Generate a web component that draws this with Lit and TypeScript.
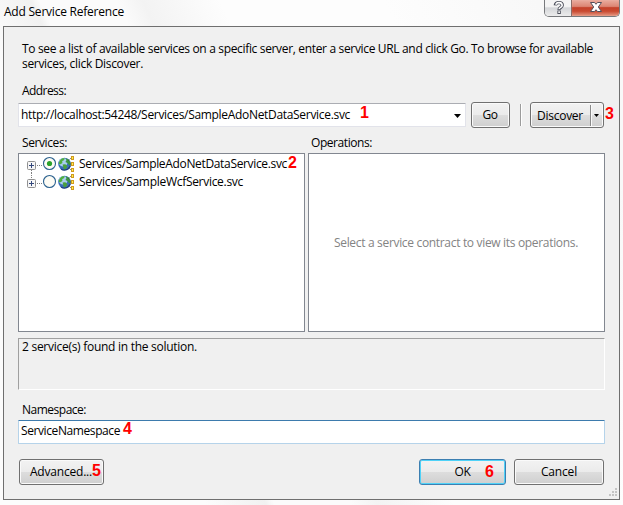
import { LitElement, html, css, svg } from "lit";
import { customElement } from "lit/decorators.js";

const FONT = '12px "Open Sans", "Noto Sans", sans-serif';
const pen = document.createElement("canvas").getContext("2d")!;

// Sets a run of text to a given advance width by spreading the difference over its letters.
const run = (text: string, width: number) => {
  pen.font = FONT;
  const gap = (width - pen.measureText(text).width) / text.length;
  return html`<span class="run" style="letter-spacing:${gap.toFixed(3)}px">${text}</span>`;
};

const globe = svg`
  <circle cx="6.5" cy="8" r="6.3" fill="#3a6fb8"/>
  <circle cx="5.2" cy="6.2" r="4.3" fill="#a9cdf0"/>
  <path d="M1 6 L2.6 3.4 L5 2 L7 2.6 L5.6 4.4 L4.2 5 L4.4 7 L2.6 8.2 L.8 8Z" fill="#4fae3e"/>
  <path d="M8 2.4 L10.4 3.2 L12.2 6 L12.6 9 L11 9 L9.4 7 L7.4 6 L8.4 4.4Z" fill="#3a9440"/>
  <path d="M4.6 8.6 L7.4 8.2 L9.4 10.2 L8 12.8 L6.2 13.8 L5.4 11.4Z" fill="#4aa03c"/>
  <path d="M12.5 9.5 A6.3 6.3 0 0 1 3 13" fill="none" stroke="#1d3f80" stroke-width="1.2"/>
  <path d="M10.5 4.5 L13.5 1.5 M12.5 8H14 M10.5 11.5 L13.5 14.5" stroke="#444" stroke-dasharray="1 1" fill="none"/>
  <g fill="#fff04a" stroke="#d09a20" stroke-width="1">
    <rect x="13.5" y="0.5" width="2" height="3"/><rect x="13.5" y="6.5" width="2" height="3"/>
    <rect x="13.5" y="12.5" width="2" height="3"/>
  </g>`;

@customElement("service-row")
class ServiceRow extends LitElement {
  static properties = { label: {}, span: { type: Number }, checked: { type: Boolean } };
  declare label: string;
  declare span: number;
  declare checked: boolean;

  static styles = css`
    :host { display: flex; height: 18px; align-items: center; }
    svg { flex: none; display: block; }
    .run { white-space: pre; line-height: 15px; margin: 0 0 1px 3px; }
  `;

  render() {
    return html`
      <svg width="49" height="18" viewBox="0 0 49 18">
        <path d="M10 10.5H16" stroke="#808080" stroke-dasharray="1 1"/>
        ${this.checked
          ? svg`<path d="M4.5 15V18" stroke="#808080" stroke-dasharray="1 1"/>`
          : svg`<path d="M4.5 0V6" stroke="#808080" stroke-dasharray="1 1"/>`}
        <rect x=".5" y="6.5" width="8" height="8" rx="1" fill="#f6f6f6" stroke="#919191"/>
        <path d="M2 10.5H7M4.5 8V13" stroke="#34487c"/>
        <circle cx="22.5" cy="8.5" r="6" fill="#fdfcf5" stroke="#2b618f" stroke-width="1.1"/>
        ${this.checked ? svg`<circle cx="22.5" cy="8.5" r="2.6" fill="#2ba22b"/>` : ""}
        <g transform="translate(31 1)">${globe}</g>
      </svg>
      ${run(this.label, this.span)}`;
  }
}

@customElement("app-root")
class AppRoot extends LitElement {
  static styles = css`
    :host {
      display: flex; flex-direction: column; position: relative; box-sizing: border-box;
      width: 623px; height: 505px; overflow: hidden; color: #000;
      font: 12px/15px "Open Sans", "Noto Sans", sans-serif;
      background: linear-gradient(65deg, #fcfcfc 0 24%, #f1f1f1 31%, #fbfbfb 32% 41%, #f3f3f3 44%, #fdfdfd 53% 72%, #f8f8f8 90%);
    }
    * { box-sizing: border-box; }
    .run { white-space: pre; }
    .title { display: flex; justify-content: space-between; height: 26px; padding: 0 3px 0 4px; flex: none; }
    .title .run { margin-top: 4px; }
    .caps { display: flex; height: 17px; border: 1px solid #77797c; border-top: 0; border-radius: 0 0 5px 5px; overflow: hidden; width: 76px; }
    .help { width: 27px; background: linear-gradient(#f4f4f4 0 40%, #d4d6d9 50%, #ececec); border-right: 1px solid #8b6b66; }
    .close { flex: 1; background: linear-gradient(#e8a799 0 5%, #dc8674 40%, #c4412a 48%, #c94a31 70%, #e59a85); box-shadow: inset 0 0 1px #fff8; }
    .caps svg { display: block; }
    .body {
      display: flex; flex-direction: column; width: 617px; height: 474px; margin-left: 3px; flex: none;
      border: 1px solid #6f6f6f; background: #f0f0f0; padding: 15px 14px 0 14px; position: relative;
    }
    .intro { display: flex; flex-direction: column; padding-left: 4px; height: 42px; margin-top: -1px; }
    .label { padding-left: 4px; height: 15px; display: flex; }
    .address { display: flex; margin-top: 4px; height: 26px; align-items: center; }
    .combo {
      width: 448px; height: 24px; background: #fff; border: 1px solid #e2e3ea; border-top-color: #abadb3;
      display: flex; align-items: center; justify-content: space-between; padding: 0 4px 2px 2px; border-radius: 1px;
    }
    .combo svg { margin-top: 3px; }
    .btn {
      height: 26px; border: 1px solid #707070; border-radius: 3px; display: flex; align-items: center; justify-content: center;
      background: linear-gradient(#f2f2f2, #ebebeb 49%, #dddddd 51%, #cfcfcf); box-shadow: inset 0 0 0 1px #fafafa; flex: none;
    }
    .go { width: 39px; margin-left: 5px; padding: 0 1px 2px 0; }
    .rule { width: 1px; height: 22px; background: #9c9c9c; margin: 0 9px 0 10px; box-shadow: 1px 0 #fff; }
    .split { width: 74px; justify-content: flex-start; padding-left: 6px; }
    .split i { width: 1px; height: 21px; background: #8a8a8a; margin-left: 7px; box-shadow: 1px 0 #fafafa; }
    .split svg { margin-left: 3px; }
    .panes { display: grid; grid-template-columns: 287px 297px; column-gap: 3px; margin-top: 7px; }
    .panes .label { padding-left: 3px; }
    .panes > :first-child .label { padding-left: 4px; }
    .list { height: 179px; margin-top: 3px; background: #fff; border: 1px solid #828790; }
    .tree { padding: 1px 0 0 8px; }
    .empty { display: flex; align-items: center; justify-content: center; color: #838383; padding-right: 1px; }
    .status { height: 52px; margin-top: 6px; border: 1px solid #a0a0a0; border-right-color: #fff; border-bottom-color: #fff; padding: 0 0 0 3px; }
    .ns { margin-top: 12px; }
    .input {
      height: 24px; margin-top: 3px; background: #fff; border: 1px solid #b5d3ea; border-top-color: #3d7bad;
      border-radius: 1px; padding: 2px; display: flex;
    }
    .foot { display: flex; margin: 15px 1px 0; }
    .foot .btn { padding-bottom: 1px; }
    .adv { width: 85px; padding-right: 1px; }
    .ok { width: 87px; margin-left: auto; border-color: #3c7fb1; box-shadow: inset 0 0 0 1px #4fd2f8; }
    .cancel { width: 90px; margin-left: 8px; }
    .grip { position: absolute; right: 1px; bottom: 1px; }
    .mark { position: absolute; font: bold 16px/16px "Liberation Sans", Arial, sans-serif; color: #f00; }
    .m1 { left: 360px; top: 105px; } .m2 { left: 288px; top: 155px; } .m3 { left: 605px; top: 106px; }
    .m4 { left: 123px; top: 421px; } .m5 { left: 92px; top: 463px; } .m6 { left: 485px; top: 464px; }
  `;

  render() {
    return html`
      <div class="title">
        ${run("Add Service Reference", 120)}
        <div class="caps">
          <div class="help"><svg width="26" height="16" viewBox="0 0 26 16" fill="none">
            <path d="M10.3 5.4Q10.6 2.6 14 2.6T17.2 5.2Q17.2 6.5 15.6 7.4T14.1 9.9M14.1 10.6V14" stroke="#4d505c" stroke-width="3.4"/>
            <path d="M11 4.8Q11 2.6 14 2.6T17.2 5.2Q17.2 6.5 15.6 7.4T14.1 9.2M14.1 11.2V13" stroke="#fff" stroke-width="1.6"/>
          </svg></div>
          <div class="close"><svg width="48" height="16" viewBox="0 0 48 16">
            <path d="M18.5 2.5H22.5L24 4.3L25.5 2.5H29.5L26.3 7L29.5 11.5H25.5L24 9.7L22.5 11.5H18.5L21.7 7Z" fill="#fff" stroke="#534f5b"/>
          </svg></div>
        </div>
      </div>
      <div class="body">
        <div class="intro">
          ${run("To see a list of available services on a specific server, enter a service URL and click Go. To browse for available", 571)}
          ${run("services, click Discover.", 121)}
        </div>
        <div class="label">${run("Address:", 44)}</div>
        <div class="address">
          <div class="combo">
            ${run("http://localhost:54248/Services/SampleAdoNetDataService.svc", 329)}
            <svg width="7" height="4"><path d="M0 0H7L3.5 4Z"/></svg>
          </div>
          <div class="btn go">${run("Go", 15)}</div>
          <div class="rule"></div>
          <div class="btn split">${run("Discover", 46)}<i></i><svg width="5" height="3"><path d="M0 0H5L2.5 3Z"/></svg></div>
        </div>
        <div class="panes">
          <div>
            <div class="label">${run("Services:", 45)}</div>
            <div class="list tree">
              <service-row label="Services/SampleAdoNetDataService.svc" span="208" checked></service-row>
              <service-row label="Services/SampleWcfService.svc" span="164"></service-row>
            </div>
          </div>
          <div>
            <div class="label">${run("Operations:", 61)}</div>
            <div class="list empty">${run("Select a service contract to view its operations.", 244)}</div>
          </div>
        </div>
        <div class="status">${run("2 service(s) found in the solution.", 175)}</div>
        <div class="label ns">${run("Namespace:", 64)}</div>
        <div class="input">${run("ServiceNamespace", 99)}</div>
        <div class="foot">
          <div class="btn adv">${run("Advanced...", 62)}</div>
          <div class="btn ok">${run("OK", 16)}</div>
          <div class="btn cancel">${run("Cancel", 36)}</div>
        </div>
        <svg class="grip" width="10" height="10" fill="#c4c4c4">
          <path d="M7 0h2v2h-2zM7 3h2v2h-2zM7 6h2v2h-2zM4 3h2v2h-2zM4 6h2v2h-2zM1 6h2v2h-2z"/>
        </svg>
      </div>
      ${[1, 2, 3, 4, 5, 6].map((n) => html`<span class="mark m${n}">${n}</span>`)}
    `;
  }
}
